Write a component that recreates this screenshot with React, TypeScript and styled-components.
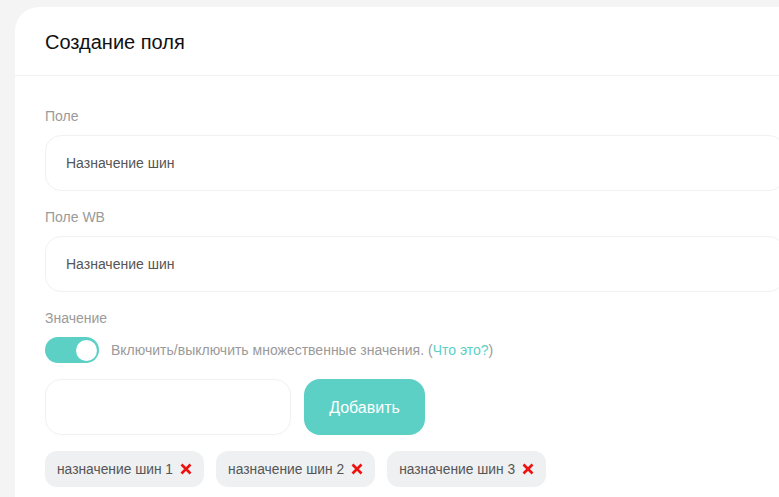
import React, { useState } from 'react'
import styled, { createGlobalStyle } from 'styled-components'

const colors = {
    page: '#f4f4f4',
    line: '#f1f1f1',
    label: '#9a9a9a',
    text: '#555555',
    teal: '#5dd0c6',
    chip: '#eef0f2',
    red: '#ee1111',
}

const Global = createGlobalStyle`
    html, body {
        margin: 0;
        padding: 0;
        background: ${colors.page};
        font-family: "Liberation Sans", Arial, sans-serif;
        overflow: hidden;
    }
    * {
        box-sizing: border-box;
    }
`

const Page = styled.div`
    padding: 7px 0 0 15px;
    height: 497px;
`

const Card = styled.section`
    background: #fff;
    border-radius: 24px 0 0 0;
    width: 800px;
    min-height: 520px;
`

const Header = styled.header`
    height: 69px;
    padding: 3px 30px 0;
    display: flex;
    align-items: center;
    border-bottom: 1px solid ${colors.line};

    & h1 {
        margin: 0;
        font-size: 20px;
        font-weight: 400;
        color: #111;
    }
`

const Body = styled.div`
    padding: 30px 30px 0;
    display: flex;
    flex-direction: column;
`

const Label = styled.div`
    font-size: 14px;
    color: ${colors.label};
    line-height: 20px;
    margin-bottom: 9px;
`

const Input = styled.input<{ $width?: number }>`
    width: ${p => (p.$width ? `${p.$width}px` : '100%')};
    height: 56px;
    border: 1px solid ${colors.line};
    border-radius: 16px;
    padding: 0 20px;
    font-family: inherit;
    font-size: 14px;
    color: ${colors.text};
    background: #fff;
    outline: none;
`

const Group = styled.div`
    display: flex;
    flex-direction: column;
    margin-bottom: 16px;
`

const ToggleRow = styled.div`
    display: flex;
    align-items: center;
    gap: 12px;
    margin: 0 0 16px;
    font-size: 14px;
    color: ${colors.label};

    & a {
        color: ${colors.teal};
        text-decoration: none;
    }
`

const Switch = styled.button<{ $on: boolean }>`
    position: relative;
    width: 54px;
    height: 26px;
    border: none;
    border-radius: 13px;
    padding: 0;
    background: ${p => (p.$on ? colors.teal : '#d6d6d6')};
    cursor: pointer;

    &::after {
        content: '';
        position: absolute;
        top: 2.5px;
        left: ${p => (p.$on ? '30.5px' : '2.5px')};
        width: 21px;
        height: 21px;
        border-radius: 50%;
        background: #fff;
    }
`

const AddRow = styled.div`
    display: flex;
    gap: 13px;
    margin-bottom: 16px;
`

const AddButton = styled.button`
    width: 121px;
    height: 56px;
    border: none;
    border-radius: 16px;
    background: ${colors.teal};
    color: #fff;
    font-family: inherit;
    font-size: 16px;
    padding-top: 3px;
    cursor: pointer;
`

const Tags = styled.div`
    display: flex;
    gap: 12px;
`

const Tag = styled.div`
    height: 36px;
    padding: 0 12px;
    border-radius: 12px;
    background: ${colors.chip};
    display: flex;
    align-items: center;
    gap: 7px;
    font-size: 13.8px;
    color: ${colors.text};

    & svg {
        display: block;
    }
`

function Cross() {
    return (
        <svg width="12" height="12" viewBox="0 0 12 12">
            <path d="M1.5 1.5 L10.5 10.5 M10.5 1.5 L1.5 10.5" stroke={colors.red} strokeWidth="2.6" strokeLinecap="butt" />
        </svg>
    )
}

export default function App() {
    const [multi, setMulti] = useState(true)
    const tags = ['назначение шин 1', 'назначение шин 2', 'назначение шин 3']

    return (
        <Page>
            <Global />
            <Card>
                <Header>
                    <h1>Создание поля</h1>
                </Header>
                <Body>
                    <Group>
                        <Label>Поле</Label>
                        <Input defaultValue="Назначение шин" />
                    </Group>
                    <Group>
                        <Label>Поле WB</Label>
                        <Input defaultValue="Назначение шин" />
                    </Group>
                    <Label>Значение</Label>
                    <ToggleRow>
                        <Switch $on={multi} onClick={() => setMulti(!multi)} />
                        <span>
                            Включить/выключить множественные значения. (<a href="#">Что это?</a>)
                        </span>
                    </ToggleRow>
                    <AddRow>
                        <Input $width={246} />
                        <AddButton>Добавить</AddButton>
                    </AddRow>
                    <Tags>
                        {tags.map(t => (
                            <Tag key={t}>
                                {t}
                                <Cross />
                            </Tag>
                        ))}
                    </Tags>
                </Body>
            </Card>
        </Page>
    )
}
